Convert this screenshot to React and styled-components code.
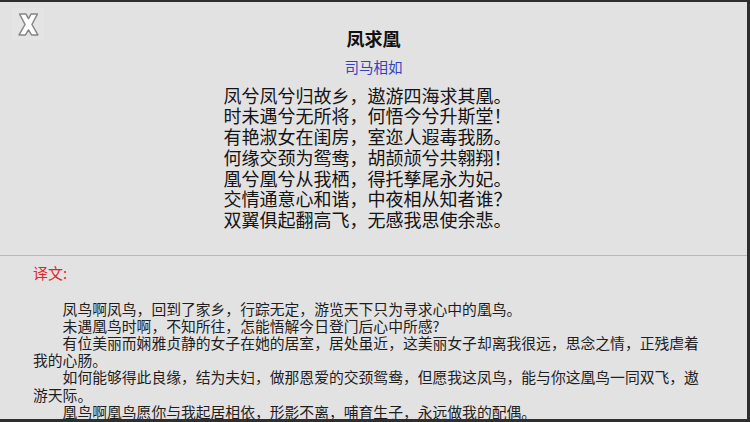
import React from 'react'
import styled, { createGlobalStyle } from 'styled-components'

const GlobalStyle = createGlobalStyle`
  html, body {
    margin: 0;
    padding: 0;
    background: #e3e2e3;
  }
`

const Screen = styled.div`
  position: relative;
  width: 750px;
  height: 422px;
  box-sizing: border-box;
  border-top: 2px solid #2e2e2e;
  border-right: 3px solid #2e2e2e;
  border-bottom: 3px solid #2e2e2e;
  background: #e3e2e3;
  overflow: hidden;
  font-family: "Noto Sans CJK SC", "Noto Sans", sans-serif;
`

const CloseButton = styled.button`
  position: absolute;
  left: 12px;
  top: 6px;
  width: 32px;
  height: 32px;
  padding: 0;
  border: 0;
  background: #e5e4e5;
  display: flex;
  align-items: center;
  justify-content: center;
  cursor: pointer;
`

const PoemPanel = styled.section`
  display: flex;
  flex-direction: column;
  align-items: center;
  padding: 25px 0 25px;
  border-bottom: 1px solid #b9b9b9;
`

const Title = styled.h1`
  margin: 0;
  font-size: 18px;
  line-height: 22px;
  font-weight: 700;
  color: #111;
`

const Author = styled.div`
  margin-top: 9px;
  font-size: 14.5px;
  line-height: 18px;
  color: #3444bd;
`

const Verse = styled.div`
  margin-top: 8.5px;
  margin-right: 12px;
  font-size: 18px;
  line-height: 20.8px;
  color: #141414;
`

const VerseLine = styled.div`
  white-space: nowrap;
`

const TranslationPanel = styled.section`
  padding: 8px 42px 0 33px;
`

const Label = styled.div`
  font-size: 15px;
  line-height: 18px;
  color: #e0262a;
`

const Body = styled.div`
  margin-top: 17.5px;
  font-size: 14.8px;
  line-height: 17.2px;
  color: #1e1e1e;
`

const Para = styled.p`
  margin: 0;
  text-indent: 2em;
`

const poem = [
  '凤兮凤兮归故乡，遨游四海求其凰。',
  '时未遇兮无所将，何悟今兮升斯堂！',
  '有艳淑女在闺房，室迩人遐毒我肠。',
  '何缘交颈为鸳鸯，胡颉颃兮共翱翔！',
  '凰兮凰兮从我栖，得托孳尾永为妃。',
  '交情通意心和谐，中夜相从知者谁？',
  '双翼俱起翻高飞，无感我思使余悲。',
]

const translation = [
  '凤鸟啊凤鸟，回到了家乡，行踪无定，游览天下只为寻求心中的凰鸟。',
  '未遇凰鸟时啊，不知所往，怎能悟解今日登门后心中所感?',
  '有位美丽而娴雅贞静的女子在她的居室，居处虽近，这美丽女子却离我很远，思念之情，正残虐着我的心肠。',
  '如何能够得此良缘，结为夫妇，做那恩爱的交颈鸳鸯，但愿我这凤鸟，能与你这凰鸟一同双飞，遨游天际。',
  '凰鸟啊凰鸟愿你与我起居相依，形影不离，哺育生子，永远做我的配偶。',
  '情投意合，两心和睦谐顺，半夜里与我互相追随，又有谁会知晓?',
  '展开双翼远走高飞，徒然为你感念相思而使我悲伤。',
]

function CloseIcon() {
  return (
    <svg width="21" height="23" viewBox="0 0 20 22">
      <path
        d="M1.5 1 L7.6 1 L10 5.4 L12.4 1 L18.5 1 L13.3 11 L19 21 L12.9 21 L10 16.2 L7.1 21 L1 21 L6.7 11 Z"
        fill="#fff"
        stroke="#858585"
        strokeWidth="1.4"
        strokeLinejoin="round"
      />
    </svg>
  )
}

export default function App() {
  return (
    <Screen>
      <GlobalStyle />
      <CloseButton aria-label="关闭">
        <CloseIcon />
      </CloseButton>
      <PoemPanel>
        <Title>凤求凰</Title>
        <Author>司马相如</Author>
        <Verse>
          {poem.map((l) => (
            <VerseLine key={l}>{l}</VerseLine>
          ))}
        </Verse>
      </PoemPanel>
      <TranslationPanel>
        <Label>译文:</Label>
        <Body>
          {translation.map((p) => (
            <Para key={p}>{p}</Para>
          ))}
        </Body>
      </TranslationPanel>
    </Screen>
  )
}
